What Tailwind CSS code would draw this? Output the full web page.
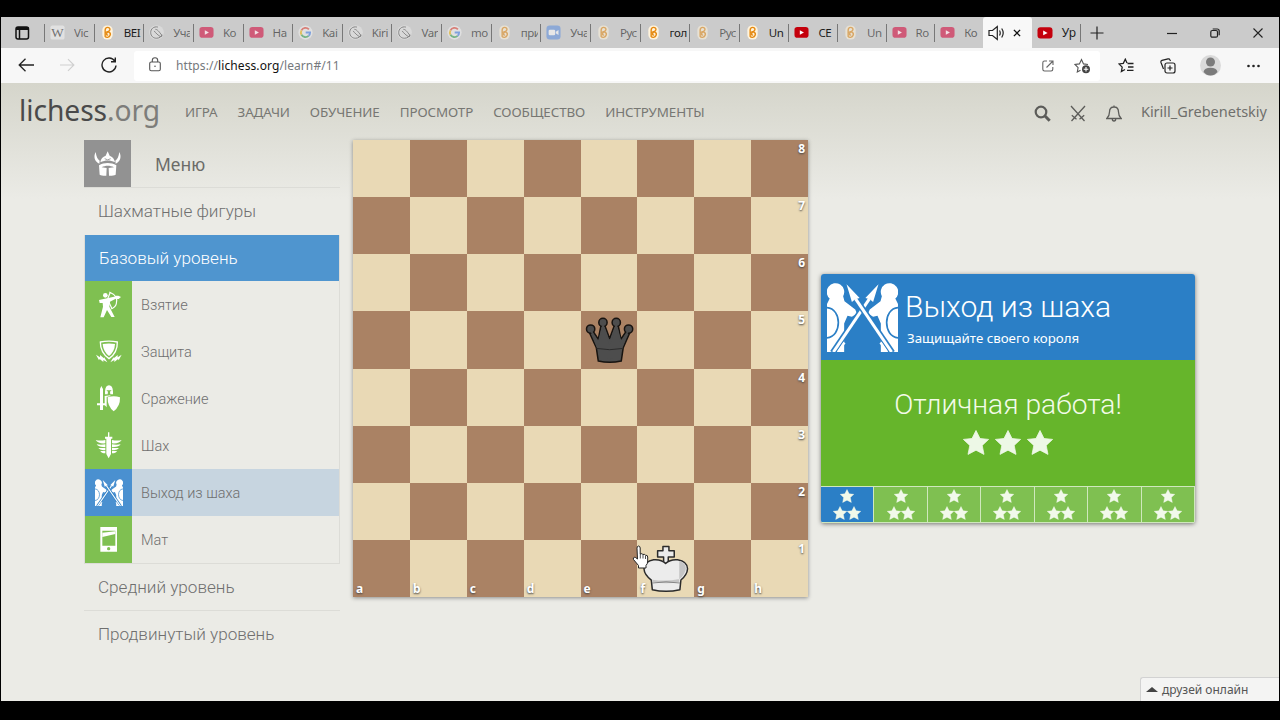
<!DOCTYPE html>
<html lang="ru">
<head>
    <meta charset="UTF-8">
    <title>lichess.org</title>
    <script src="https://cdn.jsdelivr.net/npm/@tailwindcss/browser@4"></script>
</head>
<body class="bg-black w-[1280px] h-[720px] overflow-hidden pt-[17px] px-px font-['Noto_Sans',sans-serif]">

    <!-- Icon symbols -->
    <svg class="hidden">
        <symbol id="i-youtube" viewBox="0 0 16 16"><rect x="0.5" y="2.2" width="15" height="11.4" rx="3" fill="#c4000c"/><path d="M6.2 5.5v4.8l4.4-2.4z" fill="#fff"/></symbol>
        <symbol id="i-youtube-dim" viewBox="0 0 16 16"><rect x="0.5" y="2.2" width="15" height="11.4" rx="3" fill="#cf5a78"/><path d="M6.2 5.5v4.8l4.4-2.4z" fill="#f3dfe4"/></symbol>
        <symbol id="i-knight" viewBox="0 0 16 16"><circle cx="8" cy="8" r="7.8" fill="#e6e6e6"/><path d="M9.500 2.200C5 1.200 1.800 4.200 1.800 8s3 6.300 6.400 6.100c3-.1 5-1.700 5.600-3.800M6.800 4.600c2.500.2 3.500 2 7 6.500l-1 1.700C9.500 10.800 7.500 9 5.500 6.300" fill="none" stroke="#444" stroke-width="1"/></symbol>
        <symbol id="i-google" viewBox="0 0 16 16"><circle cx="8" cy="8" r="7.6" fill="#f2f2f2"/><g fill="none" stroke-width="2"><path d="M11.600 4.600A4.900 4.900 0 0 0 3.700 5.700" stroke="#e34133"/><path d="M3.700 5.700a4.900 4.900 0 0 0 0 4.700" stroke="#f3b605"/><path d="M3.700 10.400a4.900 4.900 0 0 0 7.600 1.200" stroke="#32a350"/><path d="M11.300 11.600A4.800 4.800 0 0 0 12.900 8H8.200" stroke="#4080ee"/></g></symbol>
        <symbol id="i-wiki" viewBox="0 0 16 16"><rect x="0.500" y="0.500" width="15" height="15" rx="2" fill="#f4f4f4"/><text x="8" y="12.300" text-anchor="middle" font-family="Liberation Serif" font-size="14" fill="#222">W</text></symbol>
        <symbol id="i-braid" viewBox="0 0 16 16"><rect x="2.500" y="0.500" width="11" height="15" rx="5" fill="#fff3dc"/><g fill="none" stroke="#e58a12" stroke-width="1.500"><path d="M5.500 12.500V5.500C5.500 1.500 11 1.800 10.600 5c-.3 2.400-3.800 1.800-3.600 4.600q.4 1.800 1.700.8"/><path d="M5.700 8.500C8 5.500 12 8 10.800 11c-.9 2.700-4.500 2.800-5.200 1"/></g></symbol>
        <symbol id="i-zoom" viewBox="0 0 16 16"><rect x="0.500" y="0.500" width="15" height="15" rx="3.500" fill="#5b8fe0"/><rect x="2.800" y="5" width="7" height="6" rx="1.400" fill="#fff"/><path d="M10.500 7.300L13.300 5.200v5.600l-2.800-2z" fill="#fff"/></symbol>
        <symbol id="i-star" viewBox="0 0 26 25"><path d="M13 .5l4 8 8.600.9-6.400 6 1.800 9-8-4.200-8 4.200 1.800-9-6.400-6L9 8.500z" fill="currentColor" stroke="currentColor" stroke-width="0.800" stroke-linejoin="round"/></symbol>
        <symbol id="i-duel" viewBox="53 53 211 207" preserveAspectRatio="none">
            <g id="spearman">
                <path d="M53 118L61 102A26 26 0 1 1 101 95L105 110L137 134L142 146L127 156L114 153L104 176L104 260H53z" fill="#fff"/>
                <path d="M53 129C98 132 98 214 53 218" fill="none" class="stroke-[#2b7fc6]" stroke-width="5"/>
            </g>
            <use href="#spearman" transform="matrix(-1 0 0 1 317 0)"/>
            <g id="spear">
                <path d="M180 101L70 262" class="stroke-[#2b7fc6]" stroke-width="18"/>
                <path d="M206 60L167 100L180 104L190 112z" fill="#fff"/>
                <path d="M179 103L72 260" stroke="#fff" stroke-width="9"/>
                <path d="M105 232L86 260" stroke="#fff" stroke-width="7"/>
            </g>
            <use href="#spear" transform="matrix(-1 0 0 1 317 0)"/>
        </symbol>
        <symbol id="i-helmet" viewBox="0 0 141 141" fill="currentColor"><path d="M35 36C28 49 31 65 46 71L47 62C40 57 37 50 35 36zM106 36C113 49 110 65 95 71L94 62C101 57 104 50 106 36z"/><path d="M49 67C50 56 57 50 65 47L71 34L77 47C85 50 91 56 93 67C78 60 64 60 49 67z"/><path d="M45 76C60 67 82 67 97 76L95 104C89 107 80 108 75 107L74 84L90 82C78 76 64 76 53 82L68 84L67 107C61 108 52 107 47 104z"/><path d="M62 56q9 7 18 0" fill="none" stroke="#929292" stroke-width="2.500"/></symbol>
        <symbol id="i-archer" viewBox="0 0 141 141" fill="currentColor"><circle cx="61" cy="43" r="7"/><path d="M42 57L66 52L94 46L95 52L75 62L73 77L89 108H79L66 87L56 109H46L54 77L53 66L44 66z"/><path d="M73 33Q101 45 94 68Q92 78 79 84M76 34L68 53M70 60L81 83" fill="none" stroke="currentColor" stroke-width="3.500"/><path d="M92 44h8l8 4-7 6h-8z"/></symbol>
        <symbol id="i-shield" viewBox="0 0 141 141"><path d="M46 42Q72 37 97 42Q98 74 72 92Q46 74 46 42z" fill="none" stroke="currentColor" stroke-width="4"/><path d="M53 48Q72 45 90 48Q89 71 72 84Q55 71 53 48z" fill="currentColor"/><path d="M33 80L45 88V81L57 91V87L67 103L55 96V102L44 93L42 97zM110 80L98 88V81L86 91V87L76 103L88 96V102L99 93L101 97z" fill="currentColor"/></symbol>
        <symbol id="i-battle" viewBox="0 0 141 141" fill="currentColor"><path d="M49 33L54 42V85H63V91H54V105H45V91H36V85H45V42z"/><path d="M60 50Q61 31 72 31Q83 31 84 50L84 58H76L75 50L80 46H64L69 50L68 58H60z"/><path d="M59 63L76 61V63L65 66V97L59 90zM68 67Q86 60 105 67Q106 94 86 109Q67 94 68 67z"/></symbol>
        <symbol id="i-wings" viewBox="0 0 141 141" fill="currentColor"><path d="M69 31H73V44H82V50H78V96L71 109L64 96V50H60V44H69z"/><g id="wing"><path d="M32 54Q46 57 61 54V64Q40 66 32 54zM35 67Q48 69 61 67V75Q42 77 35 67zM40 78Q50 79 61 77V84Q45 86 40 78zM46 87Q54 88 61 86V94Q49 94 46 87z"/></g><use href="#wing" transform="matrix(-1 0 0 1 142 0)"/></symbol>
        <symbol id="i-guillotine" viewBox="0 0 141 141"><path d="M46 33H96V107H46zM52 44V89H91V44z" fill="currentColor" fill-rule="evenodd"/><path d="M52 50L91 46V54L52 63z" fill="currentColor"/><circle cx="71" cy="98" r="5" fill="#7fc051"/></symbol>
    </svg>

    <!-- Tab strip -->
    <div class="flex h-[31px] bg-[#cbcbcb] text-[12px] text-[#1c1c1c]">
        <div class="w-[43px] shrink-0 flex items-center pl-[14px]">
            <svg class="w-[15px] h-[14px]" viewBox="0 0 15 14" fill="none" stroke="#111" stroke-width="1.500"><rect x="1" y="1" width="12.500" height="12" rx="2"/><path d="M1 2.500h12.500" stroke-width="3"/><path d="M4.500 3v10"/></svg>
        </div>
        <div id="tabs" class="flex"></div>
        <div class="w-[49px] shrink-0 flex items-center bg-[#f8f8f8] rounded-t-[3px] pl-[5px] gap-[8px]">
            <svg class="w-[17px] h-[16px]" viewBox="0 0 17 16" fill="none" stroke="#222" stroke-width="1.200"><path d="M1 5.500h3.500L9.300 1.500v13L4.500 10.500H1z"/><path d="M11.500 5.500q1.500 2.500 0 5M13.700 3.500q3 4.500 0 9"/></svg>
            <svg class="w-[8px] h-[8px]" viewBox="0 0 9 9" stroke="#111" stroke-width="1.500"><path d="M1 1l7 7M8 1L1 8"/></svg>
        </div>
        <div class="w-[49px] shrink-0 flex items-center">
            <svg class="w-[16px] h-[16px] ml-[5px] mr-[9px]"><use href="#i-youtube"/></svg>
            <span class="w-[18px] tracking-[-0.300px]">Ур</span>
            <span class="w-px h-[18px] bg-[#777]"></span>
        </div>
        <div class="flex-1 flex items-center pl-[9px]">
            <svg class="w-[14px] h-[14px]" viewBox="0 0 14 14" stroke="#222" stroke-width="1.200"><path d="M7 .5v13M.5 7h13"/></svg>
            <svg class="w-[10px] h-[10px] ml-[63px]" viewBox="0 0 10 10" stroke="#222" stroke-width="1.200"><path d="M0 5.500h10"/></svg>
            <svg class="w-[10px] h-[10px] ml-[33px]" viewBox="0 0 10 10" fill="none" stroke="#222" stroke-width="1.200"><rect x="0.800" y="2.500" width="6.700" height="6.700" rx="1.500"/><path d="M2.700 1h4.500q2 0 2 2v4.300"/></svg>
            <svg class="w-[10px] h-[10px] ml-[33px]" viewBox="0 0 10 10" stroke="#222" stroke-width="1.100"><path d="M.5.5l9 9M9.500.5l-9 9"/></svg>
        </div>
    </div>

    <!-- Toolbar -->
    <div class="flex h-[35px] bg-[#f7f7f7] items-center">
        <div class="w-[133px] flex items-center pl-[17px] gap-[26px]">
            <svg class="w-[16px] h-[14px] mb-[2px]" viewBox="0 0 16 14" fill="none" stroke="#222" stroke-width="1.300"><path d="M7.500.8L1.200 7l6.300 6.200M1.200 7H16"/></svg>
            <svg class="w-[15px] h-[14px] mb-[2px]" viewBox="0 0 16 14" fill="none" stroke="#cfcfcf" stroke-width="1.200"><path d="M8.500.8L14.800 7l-6.300 6.200M14.800 7H0"/></svg>
            <svg class="w-[16px] h-[16px] mb-[2px]" viewBox="0 0 16 16" fill="none" stroke="#222" stroke-width="1.400"><path d="M13.800 4A7 7 0 1 0 15 8.500M14.300.5v4.300H10"/></svg>
        </div>
        <div class="w-[966px] h-[30px] bg-white rounded-[3px] flex items-center pl-[15px]">
            <svg class="w-[12px] h-[15px] mb-[2px]" viewBox="0 0 12 15" fill="none" stroke="#555" stroke-width="1.100"><rect x="0.700" y="5" width="10.600" height="8.800" rx="1.500"/><path d="M3.300 5V3.500a2.700 2.700 0 0 1 5.400 0V5"/><circle cx="6" cy="9.300" r=".8" fill="#555" stroke="none"/></svg>
            <span class="ml-[15px] mt-px text-[12px] tracking-[0.090px] text-[#75797d]">https://<span class="text-[#111]">lichess.org</span>/learn#/11</span>
            <svg class="w-[12px] h-[12px] ml-auto" viewBox="0 0 12 12" fill="none" stroke="#666" stroke-width="1.100"><path d="M5 1H2.500Q.8 1 .8 2.700v6.600Q.8 11 2.500 11h6.600q1.700 0 1.700-1.700V7M7 1h4v4M11 1L4.500 7.500"/></svg>
            <svg class="w-[17px] h-[16px] ml-[20px] mr-[9px]" viewBox="0 0 17 16" fill="none" stroke="#555" stroke-width="1.100"><path d="M6.500 12.200L3.300 14l.8-4.300L1 6.500l4.400-.6L7.500 1.500l2 4.400 4.500.6"/><circle cx="12" cy="11.300" r="4" fill="#444" stroke="none"/><path d="M12 9v4.600M9.700 11.300h4.600" stroke="#fff"/></svg>
        </div>
        <div class="flex items-center pl-[18px]">
            <svg class="w-[17px] h-[15px]" viewBox="0 0 17 15" fill="none" stroke="#222" stroke-width="1.300"><path d="M9 5L7.300 1.200 5.300 5.300 1 5.900l3.200 3.200-.8 4.400L7 11.500M9.500 5.500h6M10 9h5.500M9 12.300h6.500"/></svg>
            <svg class="w-[16px] h-[16px] ml-[25px]" viewBox="0 0 16 16" fill="none" stroke="#222" stroke-width="1.200"><rect x="5" y="5" width="10" height="10" rx="2"/><path d="M10 7.500v5M7.500 10h5M3.500 11L1 4.500Q.5 3 2 2.400L8 .9q1.500-.3 2 1l.5 1"/></svg>
            <svg class="w-[21px] h-[21px] ml-[24px]" viewBox="0 0 21 21"><circle cx="10.500" cy="10.500" r="10.500" fill="#dadada"/><circle cx="10.500" cy="7" r="4.500" fill="#7b7b7b"/><path d="M3.500 17q1-4.200 7-4.200t7 4.200q-3 3.500-7 3.500t-7-3.500z" fill="#7b7b7b"/></svg>
            <svg class="w-[13px] h-[4px] ml-[26px]" viewBox="0 0 13 4" fill="#222"><circle cx="1.500" cy="2" r="1.300"/><circle cx="6.500" cy="2" r="1.300"/><circle cx="11.500" cy="2" r="1.300"/></svg>
        </div>
    </div>

    <!-- Page -->
    <div class="relative h-[618px] bg-[#ebebe6] bg-[linear-gradient(#d5d5cb,#ebebe6_116px)]">
        <header class="flex h-[57px] items-center text-[#6f6f6c] pr-[12px]">
            <a class="w-[184px] pl-[18px] text-[28.200px] leading-none tracking-[-0.050px] text-[#4a4a4a] pb-[2px]">lichess<span class="text-[#7d7d7a]">.org</span></a>
            <nav class="flex gap-[20px] pt-px text-[13.400px] tracking-[-0.100px] text-[#777773]">
                <a>ИГРА</a><a>ЗАДАЧИ</a><a>ОБУЧЕНИЕ</a><a>ПРОСМОТР</a><a>СООБЩЕСТВО</a><a>ИНСТРУМЕНТЫ</a>
            </nav>
            <div class="ml-auto flex items-center">
                <svg class="w-[17px] h-[17px] mt-[4px]" viewBox="0 0 17 17" fill="none" stroke="#5c5c59" stroke-width="2.200"><circle cx="7" cy="7" r="5.300"/><path d="M11 11l4.700 4.700" stroke-width="3"/></svg>
                <svg class="w-[16px] h-[17px] ml-[19px] mt-[4px]" viewBox="0 0 16 17" fill="none" stroke="#5c5c59" stroke-width="1.300"><path d="M1 1L14.500 16M15 1L1.500 16M9.500 14.300l4.700-4M6.500 14.300l-4.700-4"/></svg>
                <svg class="w-[16px] h-[17px] ml-[20px] mt-[4px]" viewBox="0 0 16 17" fill="none" stroke="#5c5c59" stroke-width="1.300"><path d="M.8 13.500Q3.500 11 3.500 7q0-5 4.500-5t4.500 5q0 4 2.700 6.500zM8 2V.5M6.300 14q0 2 1.700 2t1.700-2"/></svg>
                <span class="ml-[19px] text-[14.500px] tracking-[0px]">Kirill_Grebenetskiy</span>
            </div>
        </header>

        <main class="flex">
            <!-- Side menu -->
            <aside class="ml-[83px] w-[256px] font-['Roboto',sans-serif] font-light text-[17.100px] text-[#6f6f6f]">
                <div class="flex h-[48px] border-b border-[#dcdcd7] font-['Noto_Sans',sans-serif] font-normal text-[17.500px] text-[#6b6b68] items-center">
                    <div class="w-[47px] h-[47px] bg-[#929292] text-white"><svg class="w-full h-full"><use href="#i-helmet"/></svg></div>
                    <span class="ml-[24px] mt-[2px]">Меню</span>
                </div>
                <div class="h-[47px] flex items-center pl-[14px] pt-px">Шахматные фигуры</div>
                <div class="border border-t-0 border-[#dcdcd7]">
                    <div class="h-[46px] flex items-center pl-[14px] pt-px bg-[#4f95cf] text-white">Базовый уровень</div>
                    <ul id="stages" class="text-[14.500px]"></ul>
                </div>
                <div class="h-[47px] flex items-center pl-[14px] pt-px border-b border-[#dcdcd7]">Средний уровень</div>
                <div class="h-[47px] flex items-center pl-[14px] pt-px">Продвинутый уровень</div>
            </aside>

            <!-- Board -->
            <div id="board" class="ml-[13px] w-[455px] h-[457px] grid grid-cols-8 grid-rows-8 shadow-[0_1px_4px_rgba(0,0,0,0.4)] text-white text-[12px] font-bold leading-none"></div>

            <!-- Lesson panel -->
            <section class="mt-[134px] ml-[13px] w-[374px] h-[249px] flex flex-col rounded-[3px] shadow-[0_1px_4px_rgba(0,0,0,0.5)] text-white overflow-hidden">
                <div class="h-[86px] bg-[#2b7fc6] flex pl-[6px] pt-[8px]">
                    <svg class="w-[71px] h-[70px]"><use href="#i-duel"/></svg>
                    <div class="ml-[7px]">
                        <h2 class="font-['Roboto',sans-serif] font-light text-[30.100px] leading-[50px]">Выход из шаха</h2>
                        <p class="ml-[2px] text-[13.300px] leading-[13px]">Защищайте своего короля</p>
                    </div>
                </div>
                <div class="h-[126px] bg-[#66b52b] flex flex-col items-center pt-[25px]">
                    <h3 class="font-['Roboto',sans-serif] font-light text-[28.200px] leading-[40px] text-[#f3fbe9]">Отличная работа!</h3>
                    <div class="flex gap-[6px] mt-[5px] text-[#edf8e6]">
                        <svg class="w-[26px] h-[25px]"><use href="#i-star"/></svg>
                        <svg class="w-[26px] h-[25px]"><use href="#i-star"/></svg>
                        <svg class="w-[26px] h-[25px]"><use href="#i-star"/></svg>
                    </div>
                </div>
                <div id="levels" class="flex-1 flex gap-px bg-[#cfe8bd] border-t border-r border-b border-[#cfe8bd]"></div>
            </section>
        </main>

        <!-- Cursor -->
        <svg class="absolute left-[631px] top-[462px] w-[17px] h-[24px]" viewBox="0 0 17 24"><path d="M5.500 14L5 3.200Q5 1 6.500 1T8.200 3v6q2-1 2.700.5 2-.8 2.500.8 2.300-.5 2.300 1.700v4q0 3-1.700 4.500V23H6.500v-2.500L1.500 14.500Q.8 12.500 2.300 12.300 3.500 12 5.500 14z" fill="#fff" stroke="#222" stroke-width="1"/><path d="M8.300 9v4.500M11 10v3.500M13.500 11v3" stroke="#222" stroke-width=".8"/></svg>

        <!-- Friends box -->
        <div class="absolute right-0 bottom-0 w-[139px] h-[24px] border border-b-0 border-r-0 border-[#d2d2d2] rounded-tl-[3px] bg-[#f4f4f3] flex items-center pl-[5px] text-[12px] text-[#555]">
            <svg class="w-[12px] h-[5px] mr-[4px]" viewBox="0 0 12 5"><path d="M0 5L6 0l6 5z" fill="#444"/></svg>
            друзей онлайн
        </div>
    </div>

    <script>
        // [icon, title, awake]
        const tabs = [
            ['wiki', 'Vic', 0], ['braid', 'BEI', 1], ['knight', 'Уча', 0], ['youtube-dim', 'Ko', 0],
            ['youtube-dim', 'На', 0], ['google', 'Kai', 0], ['knight', 'Kiri', 0], ['knight', 'Var', 0],
            ['google', 'mo', 0], ['braid', 'при', 0], ['zoom', 'Уча', 0], ['braid', 'Рус', 0],
            ['braid', 'гол', 1], ['braid', 'Рус', 0], ['braid', 'Un', 1], ['youtube', 'CE', 1],
            ['braid', 'Un', 0], ['youtube-dim', 'Ro', 0], ['youtube-dim', 'Ко', 0],
        ];
        document.getElementById('tabs').innerHTML = tabs.map(([icon, title, awake], i) => `
            <div class="${i < 15 ? 'w-[49.630px]' : 'w-[48.600px]'} shrink-0 flex items-center ${awake ? '' : 'text-[#1c1c1c]/60'}">
                <span class="w-px h-[18px] bg-[#777]"></span>
                <svg class="w-[15px] h-[15px] ml-[5px] mr-[9px] shrink-0 ${awake || icon === 'youtube-dim' ? '' : 'opacity-55'}"><use href="#i-${icon}"/></svg>
                <span class="w-[17px] overflow-hidden whitespace-nowrap text-[11.500px] tracking-[-0.400px]">${title}</span>
            </div>`).join('');

        const stages = [
            ['archer', 'Взятие'], ['shield', 'Защита'], ['battle', 'Сражение'],
            ['wings', 'Шах'], ['duel', 'Выход из шаха'], ['guillotine', 'Мат'],
        ];
        document.getElementById('stages').innerHTML = stages.map(([icon, name]) => {
            const active = icon === 'duel';
            return `
            <li class="flex h-[47px] items-center ${active ? 'bg-[#c7d5e0]' : ''}">
                <div class="w-[47px] h-[47px] flex items-center justify-center text-white ${active ? 'bg-[#4a90d0]' : 'bg-[#7fc051]'}">
                    <svg class="${active ? 'w-[28px] h-[27px]' : 'w-[47px] h-[47px]'}"><use href="#i-${icon}"/></svg>
                </div>
                <span class="ml-[9px] mt-[3px]">${name}</span>
            </li>`;
        }).join('');

        const pieces = {
            e5: `<svg class="w-full h-full" viewBox="0 0 171 171" fill="#4d4d4d" stroke="#171310" stroke-width="4.500" stroke-linejoin="round">
                    <g id="queen">
                        <path d="M24 62L46 110L52 150Q86 158 121 150L127 110L148 62L135 62L120 84L112 44L100 44L86 82L72 44L60 44L52 84L37 62z"/>
                        <circle cx="29" cy="54" r="12.500"/><circle cx="66" cy="34" r="12.500"/><circle cx="106" cy="34" r="12.500"/><circle cx="143" cy="54" r="12.500"/>
                    </g>
                    <path d="M31 60L50 110L86 146L122 110L141 60L121 97L106 42L86 97L66 42L52 97z" stroke="#4d4d4d"/>
                    <path d="M46 112Q86 120 127 112" fill="none" stroke="#2b2b2b" stroke-width="3"/></svg>`,
            f1: `<svg class="w-full h-full" viewBox="0 0 171 171" fill="#ececec" stroke="#2b2b2b" stroke-width="4.500" stroke-linejoin="round">
                    <path d="M80 70V51H62V32H78V19H96V32H112V51H94V70z"/>
                    <path d="M86 70Q100 57 122 59Q151 64 152 86Q151 104 132 120L129 149Q87 159 46 149L43 120Q22 104 21 86Q23 64 50 59Q73 57 86 70z"/>
                    <path d="M127 63Q148 70 147 86Q145 102 128 117Q87 125 46 119L48 126Q87 134 127 126" fill="#c5c5c5" stroke="none"/>
                    <path d="M46 129Q87 122 129 129" fill="none" stroke="#777" stroke-width="2.500"/></svg>`,
        };
        let squares = '';
        for (let rank = 8; rank >= 1; rank--) {
            for (let f = 0; f < 8; f++) {
                const file = 'abcdefgh'[f];
                squares += `<div class="relative ${(rank + f) % 2 ? 'bg-[#aa8264]' : 'bg-[#e9d9b5]'}">
                    ${rank === 1 ? `<span class="absolute left-[3px] bottom-[2px] [text-shadow:0_1px_2px_#444]">${file}</span>` : ''}
                    ${f === 7 ? `<span class="absolute right-[3px] top-[3px] [text-shadow:0_1px_2px_#444]">${rank}</span>` : ''}
                    ${pieces[file + rank] ? `<div class="absolute inset-0">${pieces[file + rank]}</div>` : ''}
                </div>`;
            }
        }
        document.getElementById('board').innerHTML = squares;

        const star = '<svg class="w-[14px] h-[14px]"><use href="#i-star"/></svg>';
        document.getElementById('levels').innerHTML = Array.from({ length: 7 }, (_, i) => `
            <div class="flex-1 flex flex-col items-center pt-[2px] gap-[3px] text-[#f1f9ea] ${i === 0 ? 'bg-[#2b7fc6]' : 'bg-[#7fc051]'}">
                ${star}<div class="flex">${star}${star}</div>
            </div>`).join('');
    </script>
</body>
</html>
